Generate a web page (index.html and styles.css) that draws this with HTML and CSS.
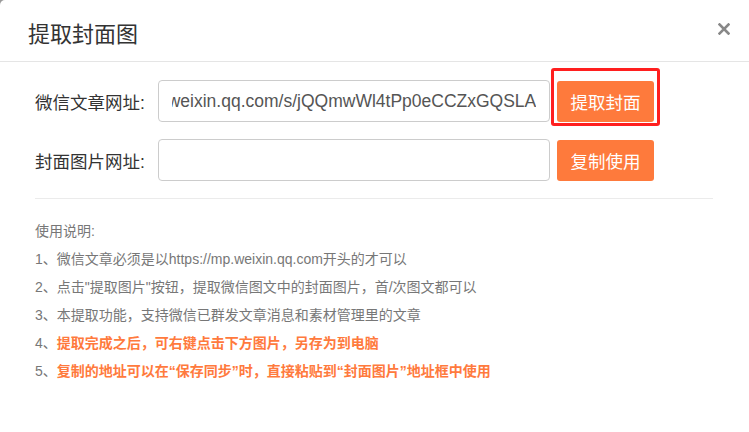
FILE: index.html
```html
<!DOCTYPE html>
<html lang="zh-CN">

<head>
    <meta charset="UTF-8">
    <meta name="viewport" content="width=device-width, initial-scale=1.0">
    <title>提取封面图</title>
    <link rel="stylesheet" href="styles.css">
</head>

<body>

    <div class="modal">
        <div class="modal-header">
            <h4 class="modal-title">提取封面图</h4>
            <button type="button" class="close-btn" aria-label="关闭">
                <svg width="12" height="12" viewBox="0 0 12 12">
                    <path d="M1.5 1.5 L10.5 10.5 M10.5 1.5 L1.5 10.5" stroke="#888" stroke-width="2.6" stroke-linecap="square" />
                </svg>
            </button>
        </div>

        <div class="modal-body">
            <!-- 微信文章网址 -->
            <div class="form-row">
                <label for="articleUrl">微信文章网址:</label>
                <input type="text" id="articleUrl" value="https://mp.weixin.qq.com/s/jQQmwWl4tPp0eCCZxGQSLA" />
                <span class="btn-wrap highlight">
                    <button type="button" class="btn-orange">提取封面</button>
                </span>
            </div>

            <!-- 封面图片网址 -->
            <div class="form-row">
                <label for="coverUrl">封面图片网址:</label>
                <input type="text" id="coverUrl" value="" />
                <span class="btn-wrap">
                    <button type="button" class="btn-orange">复制使用</button>
                </span>
            </div>

            <div class="divider"></div>

            <!-- 使用说明 -->
            <div class="notes">
                <p>使用说明:</p>
                <p>1、微信文章必须是以https://mp.weixin.qq.com开头的才可以</p>
                <p>2、点击"提取图片"按钮，提取微信图文中的封面图片，首/次图文都可以</p>
                <p>3、本提取功能，支持微信已群发文章消息和素材管理里的文章</p>
                <p>4、<strong>提取完成之后，可右键点击下方图片，另存为到电脑</strong></p>
                <p>5、<strong>复制的地址可以在“保存同步”时，直接粘贴到“封面图片”地址框中使用</strong></p>
            </div>
        </div>
    </div>

    <script>
        // Afficher la fin de l'adresse dans le champ
        var articleUrl = document.getElementById("articleUrl");
        articleUrl.scrollLeft = articleUrl.scrollWidth;
    </script>

</body>
</html>
```

FILE: styles.css
```css
body {
    margin: 0;
    background-color: #9a9a9a;
    font-family: "Liberation Sans", "Noto Sans CJK SC", sans-serif;
}

.modal {
    background-color: #fff;
    border-top-left-radius: 5px;
    height: 432px;
    overflow: hidden;
}

.modal-header {
    display: flex;
    align-items: center;
    justify-content: space-between;
    height: 61px;
    padding: 0 19px 0 28px;
    border-bottom: 1px solid #e5e5e5;
}

.modal-title {
    margin: 0;
    padding-top: 2px;
    font-size: 22px;
    font-weight: normal;
    color: #333;
}

.close-btn {
    display: flex;
    padding: 0;
    margin-top: -3px;
    border: none;
    background: none;
    cursor: pointer;
}

.modal-body {
    padding: 18px 36px 0 35px;
}

.form-row {
    display: flex;
    align-items: center;
    margin-bottom: 17px;
}

.form-row label {
    width: 123px;
    font-size: 17.5px;
    color: #333;
}

.form-row input {
    box-sizing: border-box;
    width: 392px;
    height: 42px;
    padding: 6px 13px;
    border: 1px solid #ccc;
    border-radius: 4px;
    font-family: "Liberation Sans", "Noto Sans CJK SC", sans-serif;
    font-size: 17.5px;
    color: #555;
}

.btn-wrap {
    position: relative;
    margin-left: 7px;
}

.btn-orange {
    display: block;
    width: 97px;
    height: 41px;
    padding: 0;
    border: none;
    border-radius: 3px;
    background-color: #fe7a3c;
    color: #fff;
    font-family: "Liberation Sans", "Noto Sans CJK SC", sans-serif;
    font-size: 17.5px;
    cursor: pointer;
}

.highlight::after {
    content: "";
    position: absolute;
    top: -13px;
    bottom: -4px;
    left: -6px;
    right: -6px;
    border: 3px solid #ff1f1f;
    border-radius: 3px;
}

.divider {
    margin-top: 1px;
    border-top: 1px solid #ebebeb;
}

.notes {
    padding-top: 18px;
    font-size: 14px;
    color: #777;
}

.notes p {
    margin: 0;
    line-height: 28px;
}

.notes strong {
    color: #ff7a3d;
}
```
